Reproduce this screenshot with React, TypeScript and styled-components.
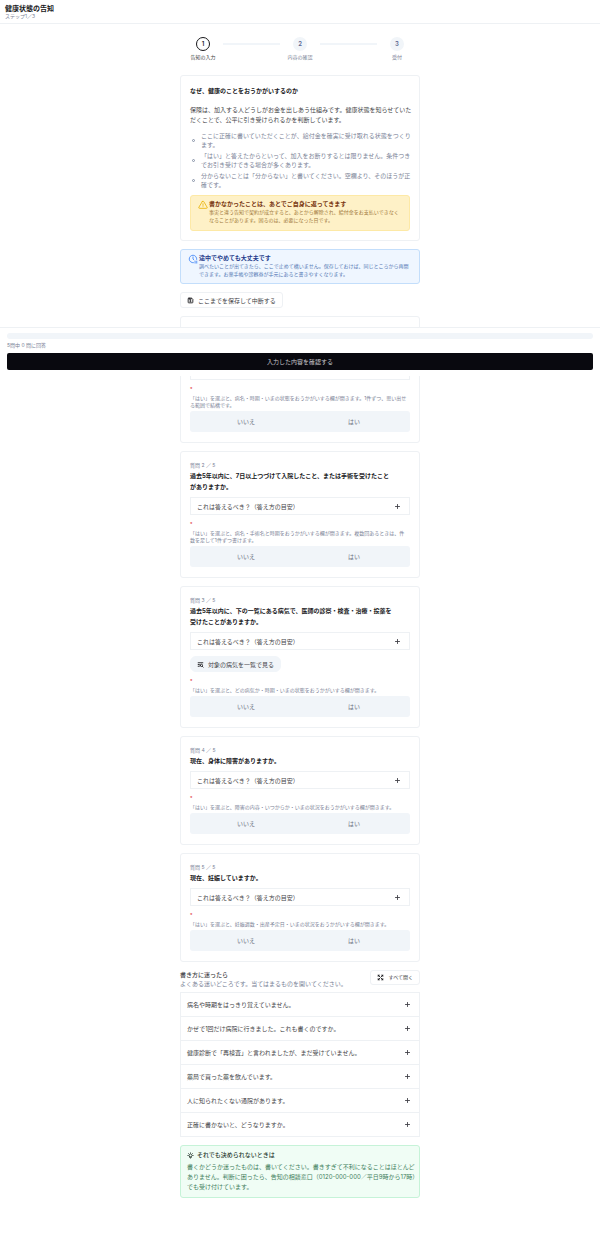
import React from "react";
import styled, { createGlobalStyle, css } from "styled-components";
import {
  TbAlertTriangle,
  TbArrowsMaximize,
  TbBulb,
  TbClockPause,
  TbDeviceFloppy,
  TbListSearch,
  TbPlus,
} from "react-icons/tb";

const color = {
  ink: "#18181b",
  text: "#3f3f46",
  muted: "#7a8296",
  line: "#eef1f4",
  soft: "#f1f5f9",
};

const GlobalStyle = createGlobalStyle`
  *, *::before, *::after { box-sizing: border-box; }
  body {
    margin: 0;
    background: #fff;
    color: ${color.text};
    font-family: Inter, "Noto Sans CJK JP", sans-serif;
    font-size: 6px;
    line-height: 9px;
  }
  h1, h2, h3, p, ul, fieldset, legend { margin: 0; padding: 0; }
  button { font: inherit; color: inherit; cursor: pointer; }
`;

const Page = styled.div`
  position: relative;
  padding-bottom: 54px;
`;

const Header = styled.header`
  display: flex;
  flex-direction: column;
  padding: 4px 5px 3px;
  border-bottom: 1px solid ${color.line};
`;

const PageTitle = styled.h1`
  font-size: 7px;
  line-height: 9px;
  font-weight: 700;
  color: ${color.ink};
`;

const StepCount = styled.p`
  font-size: 5px;
  line-height: 7px;
  color: ${color.muted};
`;

const Main = styled.main`
  display: flex;
  flex-direction: column;
  gap: 8px;
  max-width: 240px;
  margin: 0 auto;
  padding-top: 13px;
`;

const Stepper = styled.ol`
  display: flex;
  gap: 7px;
  list-style: none;
  margin: 0 0 6px;
  padding: 0 10px;
`;

const Step = styled.li<{ $active?: boolean }>`
  display: flex;
  flex-direction: column;
  align-items: center;
  gap: 2px;
  width: 26px;
  font-size: 5px;
  line-height: 8px;
  white-space: nowrap;
  color: ${(p) => (p.$active ? color.text : color.muted)};
`;

const StepNumber = styled.span<{ $active?: boolean }>`
  display: grid;
  place-items: center;
  width: 14px;
  height: 14px;
  border-radius: 50%;
  font-size: 6px;
  font-weight: 600;
  ${(p) =>
    p.$active
      ? css`
          border: 1px solid ${color.ink};
          background: #fff;
          color: ${color.ink};
        `
      : css`
          background: ${color.soft};
          color: #5b6690;
        `}
`;

const StepLine = styled.li`
  flex: 1;
  height: 2px;
  margin-top: 6px;
  background: ${color.soft};
`;

const Card = styled.section`
  padding: 9px;
  border: 1px solid ${color.line};
  border-radius: 3px;
  background: #fff;
`;

const CardTitle = styled.h2`
  font-size: 6px;
  line-height: 11px;
  font-weight: 700;
  color: ${color.ink};
`;

const Line = styled.span`
  display: block;
  white-space: nowrap;
`;

const Lead = styled.p`
  margin-top: 9px;
  line-height: 10px;
`;

const Reasons = styled.ul`
  display: flex;
  flex-direction: column;
  gap: 2px;
  margin: 6px 0;
  list-style: none;
  color: ${color.muted};
`;

const Reason = styled.li`
  display: flex;
  align-items: center;
  gap: 6px;
  padding-left: 2px;

  &::before {
    content: "";
    flex: none;
    width: 3px;
    height: 3px;
    border: 1px solid #8792a8;
    border-radius: 50%;
  }
`;

const alertTones = {
  warning: { bg: "#fef1c7", line: "#fde9a6", title: "#78350f", body: "#a1783a", icon: "#eab308" },
  info: { bg: "#eff6ff", line: "#c3defb", title: "#1e3a8a", body: "#5478b4", icon: "#3b82f6" },
};

const AlertBox = styled.div<{ $tone: keyof typeof alertTones }>`
  display: flex;
  gap: 1px;
  padding: 3px 7px ${(p) => (p.$tone === "warning" ? 6 : 5)}px;
  border: 1px solid ${(p) => alertTones[p.$tone].line};
  border-radius: 3px;
  background: ${(p) => alertTones[p.$tone].bg};
  color: ${(p) => alertTones[p.$tone].body};
  font-size: 5px;
  line-height: 8px;

  > svg {
    flex: none;
    width: 10px;
    height: 10px;
    margin-top: 1px;
    color: ${(p) => alertTones[p.$tone].icon};
  }
`;

const AlertTitle = styled.h3<{ $tone: keyof typeof alertTones }>`
  font-size: 6px;
  line-height: 9px;
  font-weight: 700;
  color: ${(p) => alertTones[p.$tone].title};
`;

const OutlineButton = styled.button<{ $small?: boolean }>`
  display: inline-flex;
  align-items: center;
  align-self: flex-start;
  flex: none;
  gap: ${(p) => (p.$small ? 5 : 4)}px;
  height: ${(p) => (p.$small ? 15 : 16)}px;
  padding: 0 6px;
  border: 1px solid ${color.line};
  border-radius: 3px;
  background: #fff;
  font-size: ${(p) => (p.$small ? 5 : 6)}px;
  white-space: nowrap;

  svg {
    width: 7px;
    height: 7px;
    stroke-width: 3;
    color: ${color.ink};
  }
`;

const ChipButton = styled(OutlineButton)`
  margin-top: 6px;
  border-color: ${color.soft};
  border-radius: 6px;
  background: ${color.soft};
`;

const QuestionNumber = styled.p`
  margin-bottom: 1px;
  font-size: 5px;
  line-height: 8px;
  color: ${color.muted};
`;

const Guide = styled.details`
  margin-top: 5px;
  border: 1px solid ${color.line};
`;

const Summary = styled.summary<{ $tall?: boolean }>`
  display: flex;
  align-items: center;
  justify-content: space-between;
  height: ${(p) => (p.$tall ? 23 : 16)}px;
  padding: 0 8px 0 6px;
  list-style: none;
  cursor: pointer;

  &::-webkit-details-marker {
    display: none;
  }

  svg {
    width: 7px;
    height: 7px;
    stroke-width: 3;
    color: ${color.text};
  }
`;

const GuideText = styled.p`
  padding: 0 6px 6px;
  color: ${color.muted};
`;

const Answer = styled.fieldset`
  min-width: 0;
  margin-top: 4px;
  border: 0;
`;

const Required = styled.legend`
  font-size: 5px;
  line-height: 11px;
  color: #dc2626;
`;

const Hint = styled.p`
  font-size: 5px;
  line-height: 7px;
  color: ${color.muted};
`;

const Segment = styled.div`
  display: grid;
  grid-template-columns: 1fr 1fr;
  margin: 2px 0 1px;
  padding: 2px;
  border-radius: 3px;
  background: ${color.soft};
`;

const Choice = styled.label`
  display: grid;
  place-items: center;
  height: 17px;
  border-radius: 2px;
  color: #6b7280;
  cursor: pointer;

  input {
    appearance: none;
    position: absolute;
    width: 0;
    height: 0;
    margin: 0;
  }

  &:has(input:checked) {
    background: #fff;
    color: ${color.ink};
  }
`;

const Help = styled.section`
  display: flex;
  flex-direction: column;
  gap: 4px;
`;

const HelpHeader = styled.div`
  display: flex;
  align-items: flex-start;
  justify-content: space-between;
`;

const HelpTitle = styled.h2`
  font-size: 6px;
  line-height: 9px;
  font-weight: 500;
`;

const HelpLead = styled.p`
  line-height: 9px;
  color: ${color.muted};
`;

const HelpList = styled.div`
  border: 1px solid ${color.line};
  border-bottom: 0;
`;

const HelpItem = styled.details`
  border-bottom: 1px solid ${color.line};
`;

const Advice = styled.section`
  padding: 4px 6px 5px;
  border: 1px solid #c6f3d8;
  border-radius: 3px;
  background: #f0fdf5;
  line-height: 10px;
  color: #41805c;
`;

const AdviceTitle = styled.h2`
  display: flex;
  align-items: center;
  gap: 3px;
  margin-bottom: 2px;
  font-size: 6px;
  line-height: 10px;
  font-weight: 500;
  color: #27382f;

  svg {
    width: 7px;
    height: 7px;
    stroke-width: 3;
  }
`;

const ActionBar = styled.div`
  position: absolute;
  top: 327px;
  left: 0;
  right: 0;
  z-index: 1;
  display: flex;
  flex-direction: column;
  padding: 5px 7px 6px;
  border-top: 1px solid ${color.line};
  background: #fff;
`;

const Progress = styled.progress`
  appearance: none;
  display: block;
  width: 100%;
  height: 6px;
  border: 0;
  border-radius: 3px;
  overflow: hidden;
  background: ${color.soft};

  &::-webkit-progress-bar {
    background: ${color.soft};
  }
  &::-webkit-progress-value {
    background: ${color.ink};
  }
`;

const ProgressLabel = styled.label`
  margin: 2px 0 4px;
  font-size: 5px;
  line-height: 8px;
  color: ${color.muted};
`;

const SubmitButton = styled.button`
  height: 17px;
  padding: 0;
  border: 0;
  border-radius: 2px;
  background: #09090f;
  color: #c8c8cc;
`;

function Lines({ of }: { of: string[] }) {
  return (
    <>
      {of.map((line) => (
        <Line key={line}>{line}</Line>
      ))}
    </>
  );
}

type QuestionData = { title: string[]; hint: string[]; list?: boolean };

const questions: QuestionData[] = [
  {
    title: ["過去3か月以内に、医師の診察・検査・治療・投薬を", "受けたことがありますか。"],
    hint: [
      "「はい」を選ぶと、病名・時期・いまの状態をおうかがいする欄が開きます。1件ずつ、思い出せ",
      "る範囲で結構です。",
    ],
  },
  {
    title: ["過去5年以内に、7日以上つづけて入院したこと、または手術を受けたこと", "がありますか。"],
    hint: [
      "「はい」を選ぶと、病名・手術名と時期をおうかがいする欄が開きます。複数回あるときは、件",
      "数を足して1件ずつ書けます。",
    ],
  },
  {
    title: ["過去5年以内に、下の一覧にある病気で、医師の診察・検査・治療・投薬を", "受けたことがありますか。"],
    hint: ["「はい」を選ぶと、どの病気か・時期・いまの状態をおうかがいする欄が開きます。"],
    list: true,
  },
  {
    title: ["現在、身体に障害がありますか。"],
    hint: ["「はい」を選ぶと、障害の内容・いつからか・いまの状況をおうかがいする欄が開きます。"],
  },
  {
    title: ["現在、妊娠していますか。"],
    hint: ["「はい」を選ぶと、妊娠週数・出産予定日・いまの状況をおうかがいする欄が開きます。"],
  },
];

const helpTopics = [
  "病名や時期をはっきり覚えていません。",
  "かぜで1回だけ病院に行きました。これも書くのですか。",
  "健康診断で「再検査」と言われましたが、まだ受けていません。",
  "薬局で買った薬を飲んでいます。",
  "人に知られたくない通院があります。",
  "正確に書かないと、どうなりますか。",
];

function Question({ data, index }: { data: QuestionData; index: number }) {
  const name = `question-${index + 1}`;
  return (
    <Card>
      <QuestionNumber>
        質問 {index + 1} ／ {questions.length}
      </QuestionNumber>
      <CardTitle>
        <Lines of={data.title} />
      </CardTitle>
      <Guide>
        <Summary>
          これは答えるべき？（答え方の目安）
          <TbPlus />
        </Summary>
        <GuideText>迷ったときは「はい」を選んでください。</GuideText>
      </Guide>
      {data.list && (
        <ChipButton type="button">
          <TbListSearch />
          対象の病気を一覧で見る
        </ChipButton>
      )}
      <Answer aria-label={data.title.join("")}>
        <Required>*</Required>
        <Hint>
          <Lines of={data.hint} />
        </Hint>
        <Segment>
          <Choice>
            <input type="radio" name={name} value="no" />
            いいえ
          </Choice>
          <Choice>
            <input type="radio" name={name} value="yes" />
            はい
          </Choice>
        </Segment>
      </Answer>
    </Card>
  );
}

export default function App() {
  return (
    <Page lang="ja">
      <GlobalStyle />
      <Header>
        <PageTitle>健康状態の告知</PageTitle>
        <StepCount>ステップ1／3</StepCount>
      </Header>

      <Main>
        <Stepper>
          <Step $active>
            <StepNumber $active>1</StepNumber>
            告知の入力
          </Step>
          <StepLine aria-hidden />
          <Step>
            <StepNumber>2</StepNumber>
            内容の確認
          </Step>
          <StepLine aria-hidden />
          <Step>
            <StepNumber>3</StepNumber>
            受付
          </Step>
        </Stepper>

        <Card>
          <CardTitle>なぜ、健康のことをおうかがいするのか</CardTitle>
          <Lead>
            <Lines
              of={[
                "保険は、加入する人どうしがお金を出しあう仕組みです。健康状態を知らせていた",
                "だくことで、公平に引き受けられるかを判断しています。",
              ]}
            />
          </Lead>
          <Reasons>
            <Reason>
              <div>
                <Lines of={["ここに正確に書いていただくことが、給付金を確実に受け取れる状態をつくり", "ます。"]} />
              </div>
            </Reason>
            <Reason>
              <div>
                <Lines of={["「はい」と答えたからといって、加入をお断りするとは限りません。条件つき", "でお引き受けできる場合が多くあります。"]} />
              </div>
            </Reason>
            <Reason>
              <div>
                <Lines of={["分からないことは「分からない」と書いてください。空欄より、そのほうが正", "確です。"]} />
              </div>
            </Reason>
          </Reasons>
          <AlertBox $tone="warning">
            <TbAlertTriangle />
            <div>
              <AlertTitle $tone="warning">書かなかったことは、あとでご自身に返ってきます</AlertTitle>
              <Lines
                of={[
                  "事実と違う告知で契約が成立すると、あとから解除され、給付金をお支払いできなく",
                  "なることがあります。困るのは、必要になった日です。",
                ]}
              />
            </div>
          </AlertBox>
        </Card>

        <AlertBox $tone="info">
          <TbClockPause />
          <div>
            <AlertTitle $tone="info">途中でやめても大丈夫です</AlertTitle>
            <Lines
              of={[
                "調べたいことが出てきたら、ここで止めて構いません。保存しておけば、同じところから再開",
                "できます。お薬手帳や診察券が手元にあると書きやすくなります。",
              ]}
            />
          </div>
        </AlertBox>

        <OutlineButton type="button">
          <TbDeviceFloppy />
          ここまでを保存して中断する
        </OutlineButton>

        {questions.map((question, index) => (
          <Question key={index} data={question} index={index} />
        ))}

        <Help>
          <HelpHeader>
            <div>
              <HelpTitle>書き方に迷ったら</HelpTitle>
              <HelpLead>よくある迷いどころです。当てはまるものを開いてください。</HelpLead>
            </div>
            <OutlineButton type="button" $small>
              <TbArrowsMaximize />
              すべて開く
            </OutlineButton>
          </HelpHeader>

          <HelpList>
            {helpTopics.map((topic) => (
              <HelpItem key={topic}>
                <Summary $tall>
                  {topic}
                  <TbPlus />
                </Summary>
              </HelpItem>
            ))}
          </HelpList>
        </Help>

        <Advice>
          <AdviceTitle>
            <TbBulb />
            それでも決められないときは
          </AdviceTitle>
          <Lines
            of={[
              "書くかどうか迷ったものは、書いてください。書きすぎて不利になることはほとんど",
              "ありません。判断に困ったら、告知の相談窓口（0120-000-000／平日9時から17時）",
              "でも受け付けています。",
            ]}
          />
        </Advice>
      </Main>

      <ActionBar>
        <Progress id="answered" value={0} max={5} />
        <ProgressLabel htmlFor="answered">5問中 0 問に回答</ProgressLabel>
        <SubmitButton type="button">入力した内容を確認する</SubmitButton>
      </ActionBar>
    </Page>
  );
}
